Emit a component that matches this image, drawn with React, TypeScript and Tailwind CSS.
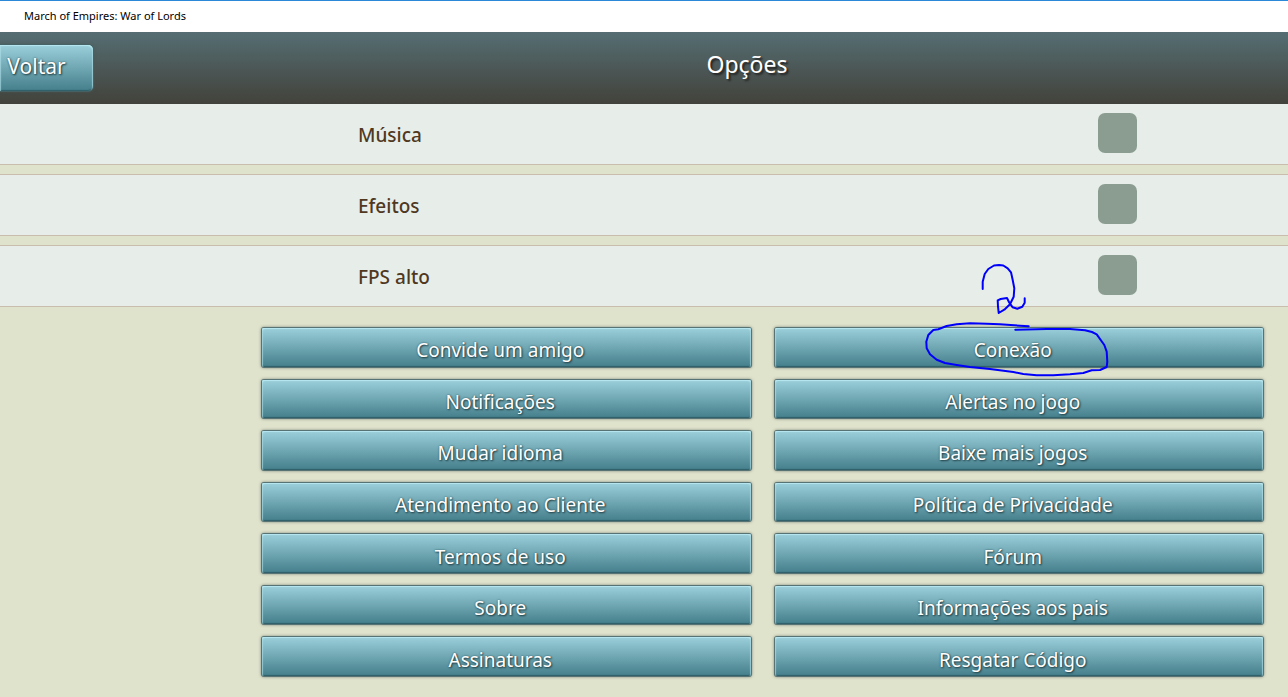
const toggles = ['Música', 'Efeitos', 'FPS alto'];

const actions = [
  'Convide um amigo',
  'Conexão',
  'Notificações',
  'Alertas no jogo',
  'Mudar idioma',
  'Baixe mais jogos',
  'Atendimento ao Cliente',
  'Política de Privacidade',
  'Termos de uso',
  'Fórum',
  'Sobre',
  'Informações aos pais',
  'Assinaturas',
  'Resgatar Código',
];

const glossy =
  'bg-linear-to-b from-[#9bd0db] to-[#447f8b] text-white [text-shadow:1px_1px_2px_#203c42,0_0_2px_#36616a] shadow-[inset_0_1px_0_#b5e6ef,inset_1px_1px_1px_#b5e6efaa,inset_-1px_1px_1px_#b5e6efaa,inset_0_-1px_1px_#2f5f68,0_0_0_1px_#45656acc,0_0_3px_1px_#4b5b55aa]';

function Toggle({ label, index }: { label: string; index: number }) {
  const id = `toggle-${index}`;
  return (
    <div className="flex h-[62px] items-center justify-between border-y border-[#c9bdad] bg-[#e7eeea] pt-px pr-[151px] pl-[358px] first:h-[61px] first:border-t-0">
      <label htmlFor={id} className="text-[19px] leading-7 font-medium text-[#50381f]">
        {label}
      </label>
      <input
        id={id}
        type="checkbox"
        className="mb-[3px] h-10 w-[39px] appearance-none rounded-[7px] bg-[#8b9d90] checked:bg-[#447f8b]"
      />
    </div>
  );
}

function Annotation() {
  return (
    <svg
      className="pointer-events-none absolute -top-[68px] left-[145px] z-10"
      width="200"
      height="120"
      viewBox="920 260 200 120"
      fill="none"
      stroke="#0000fa"
      strokeWidth="2"
      strokeLinecap="round"
      strokeLinejoin="round"
      aria-hidden="true"
    >
      <path d="M982.7 289V281.7L984.7 274L988.3 269L994 265.5L999 265L1003.3 265.5L1007.7 268.3L1011 272.3L1012.7 280L1014.3 288.3L1013.7 296.7L1010 304.3L1004.3 309.7L998.7 313L998 306.7L997.7 300.3L1000.7 299L1007 298L1009.3 302.7L1012.7 307.3L1017.3 308.7L1022.3 306.7L1024.7 302.7V298.3" />
      <path d="M1028.7 326.3L1020 325.7L1000 324.3L986.7 323.7L970 323.3L956.7 324.3L946.7 326L938.3 329.3L933.3 330L928.3 335L926.3 341.7L926.7 348.3L930 354.3L936.7 359.7L945 363L956.7 365L970 367L990 369L1013.3 372L1023.3 374L1036.7 375.3H1053.3L1070 374.3L1083.3 373L1091.7 370.3L1100 370L1106.7 367L1107.3 361.7L1106.7 351.7L1104.3 345L1096.7 334.3L1092 332L1085 330.3L1070 329H1046.7L1015.3 329.7" />
    </svg>
  );
}

export default function App() {
  return (
    <div className="min-h-screen overflow-x-hidden bg-[#e0e3cc] font-['Noto_Sans',sans-serif]">
      <div className="flex h-8 items-center border-t border-[#2b87d8] bg-white pb-0.5 pl-6 text-[11px] leading-4 text-black">
        March of Empires: War of Lords
      </div>
      <header className="flex h-[72px] items-center bg-linear-to-b from-[#556e73] to-[#42423b]">
        <button type="button" className={`h-[46px] w-[93px] shrink-0 rounded-r-[5px] pr-5 pb-0.5 text-[21px] ${glossy}`}>
          Voltar
        </button>
        <h1 className="flex-1 pb-2 pl-[113px] text-center text-[23px] leading-8 text-white [text-shadow:2px_2px_2px_#222]">
          Opções
        </h1>
      </header>
      <main>
        <section className="flex flex-col gap-[9px]">
          {toggles.map((label, i) => (
            <Toggle key={label} label={label} index={i} />
          ))}
        </section>
        <section className="grid min-h-[369px] auto-rows-fr grid-cols-2 gap-x-6 gap-y-[13px] pt-[21px] pr-[25px] pl-[262px]">
          {actions.map((label) => (
            <div key={label} className="relative flex">
              <button type="button" className={`flex-1 rounded-[2px] pt-1.5 pr-3 text-[19px] leading-7 ${glossy}`}>
                {label}
              </button>
              {label === 'Conexão' && <Annotation />}
            </div>
          ))}
        </section>
      </main>
    </div>
  );
}
